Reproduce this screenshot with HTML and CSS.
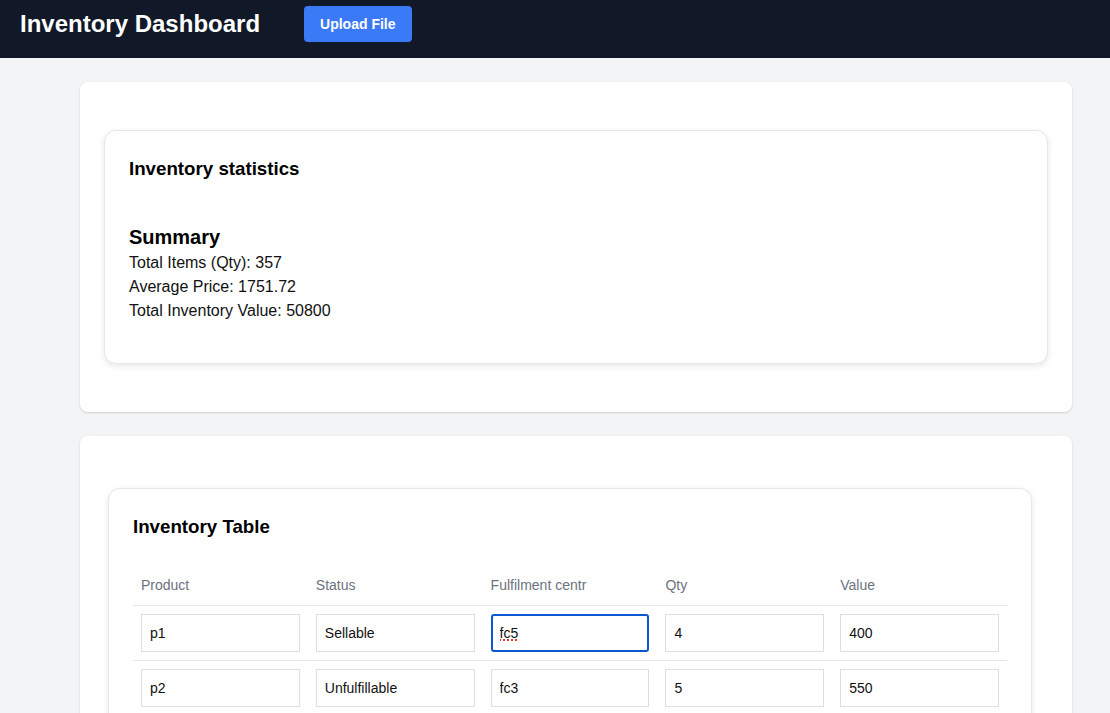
FILE: index.html
```html
<!DOCTYPE html>
<html>
<head>
<meta charset="utf-8">
<title>Inventory Dashboard</title>
<link rel="stylesheet" href="styles.css">
</head>
<body>
<header class="topbar">
  <h1 class="brand">Inventory Dashboard</h1>
  <button class="upload-btn">Upload File</button>
</header>
<main class="content">
  <section class="panel panel-stats">
    <div class="card">
      <h2 class="card-title">Inventory statistics</h2>
      <h3 class="summary-title">Summary</h3>
      <p class="stat">Total Items (Qty): 357</p>
      <p class="stat">Average Price: 1751.72</p>
      <p class="stat">Total Inventory Value: 50800</p>
    </div>
  </section>
  <section class="panel panel-table">
    <div class="card card-table">
      <h2 class="card-title">Inventory Table</h2>
      <table class="inv-table">
        <thead>
          <tr><th>Product</th><th>Status</th><th>Fulfilment centr</th><th>Qty</th><th>Value</th></tr>
        </thead>
        <tbody>
          <tr>
            <td><input class="cell-input" value="p1"></td>
            <td><input class="cell-input" value="Sellable"></td>
            <td><input class="cell-input is-focused" value="fc5"></td>
            <td><input class="cell-input" value="4"></td>
            <td><input class="cell-input" value="400"></td>
          </tr>
          <tr>
            <td><input class="cell-input" value="p2"></td>
            <td><input class="cell-input" value="Unfulfillable"></td>
            <td><input class="cell-input" value="fc3"></td>
            <td><input class="cell-input" value="5"></td>
            <td><input class="cell-input" value="550"></td>
          </tr>
          <tr>
            <td><input class="cell-input" value="p3"></td>
            <td><input class="cell-input" value="Sellable"></td>
            <td><input class="cell-input" value="fc1"></td>
            <td><input class="cell-input" value="10"></td>
            <td><input class="cell-input" value="1200"></td>
          </tr>
        </tbody>
      </table>
    </div>
  </section>
</main>
</body>
</html>
```

FILE: styles.css
```css
* { box-sizing: border-box; }
html, body {
  margin: 0;
  padding: 0;
  background: #f3f4f6;
  font-family: "Liberation Sans", Arial, Helvetica, sans-serif;
  color: #111;
}
.topbar {
  background: #111827;
  height: 58px;
  display: flex;
  align-items: flex-start;
  padding: 6px 20px 0 20px;
  gap: 44px;
}
.brand {
  margin: 0;
  color: #fff;
  font-size: 24px;
  font-weight: 700;
  line-height: 36px;
}
.upload-btn {
  background: #3b7af7;
  color: #fff;
  border: none;
  border-radius: 4px;
  height: 36px;
  padding: 0 16px;
  font-family: inherit;
  font-size: 14px;
  font-weight: 700;
}
.content {
  padding: 24px 38px 24px 80px;
  display: flex;
  flex-direction: column;
  gap: 24px;
}
.panel {
  background: #fff;
  border-radius: 8px;
  box-shadow: 0 1px 3px rgba(0,0,0,0.1), 0 1px 2px rgba(0,0,0,0.06);
}
.panel-stats { padding: 48px 24px; }
.panel-table { padding: 52px 40px 24px 28px; }
.card {
  background: #fff;
  border: 1px solid #e5e7eb;
  border-radius: 12px;
  padding: 24px;
  box-shadow: 0 2px 6px rgba(0,0,0,0.1);
}
.card-title {
  margin: 0;
  font-size: 18.72px;
  line-height: 28px;
  font-weight: 700;
  color: #000;
}
.summary-title {
  margin: 42px 0 2px 0;
  font-size: 20px;
  line-height: 24px;
  font-weight: 700;
  color: #000;
}
.stat {
  margin: 0;
  font-size: 16px;
  line-height: 24px;
}
.stat:last-child { margin-bottom: 16px; }
.card-table .card-title { margin-bottom: 20px; }
.inv-table {
  width: 100%;
  border-collapse: collapse;
  table-layout: fixed;
}
.inv-table th {
  text-align: left;
  font-weight: 400;
  font-size: 14px;
  line-height: 20px;
  color: #6b7280;
  padding: 14px 8px 10px 8px;
  border-bottom: 1px solid #e5e7eb;
}
.inv-table td {
  padding: 8px;
  border-bottom: 1px solid #e5e7eb;
}
.cell-input {
  display: block;
  width: 100%;
  height: 38px;
  border: 1px solid #dedede;
  border-radius: 0;
  padding: 0 8px;
  font-family: inherit;
  font-size: 14px;
  color: #111;
  background: #fff;
  outline: none;
}
.cell-input.is-focused {
  border: 2px solid #0b57d0;
  border-radius: 3px;
  padding: 0 7px;
  text-decoration: underline dotted #e53935;
  text-decoration-thickness: 2px;
}
```
